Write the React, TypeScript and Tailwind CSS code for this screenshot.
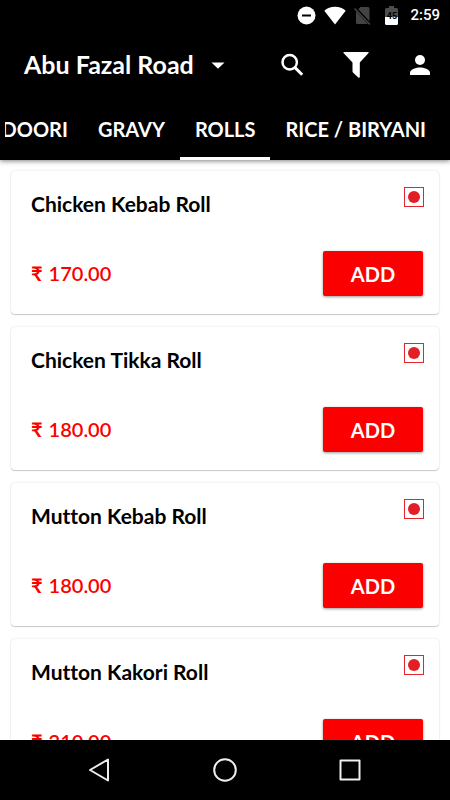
const tabs = ["TANDOORI", "GRAVY", "ROLLS", "RICE / BIRYANI"];

const items = [
  { name: "Chicken Kebab Roll", price: "170.00" },
  { name: "Chicken Tikka Roll", price: "180.00" },
  { name: "Mutton Kebab Roll", price: "180.00" },
  { name: "Mutton Kakori Roll", price: "210.00" },
];

function StatusBar() {
  return (
    <div className="flex h-[30px] shrink-0 items-center justify-end pr-[10px]">
      <svg className="mr-2 size-[19px]" viewBox="0 0 19 19">
        <circle cx="9.5" cy="9.5" r="9" fill="#fff" />
        <rect x="5" y="8.5" width="9" height="2" fill="#000" />
      </svg>
      <svg className="mr-2 h-[19px] w-[22px]" viewBox="0 0 22 19">
        <path d="M11 18.5L.3 4.7C3 2.3 6.800 .8 11 .8s8 1.500 10.700 3.900z" fill="#fff" />
      </svg>
      <svg className="mr-[14px] h-[19px] w-[17px]" viewBox="0 0 17 19">
        <path d="M6.500 1H14a1.500 1.500 0 0 1 1.500 1.500V17L15 18H3.500A1.500 1.500 0 0 1 2 16.500V5.500z" fill="#434343" />
        <path d="M1 2L16.500 18.500" stroke="#000" strokeWidth="3" />
        <path d="M.5 2.500L16 18.500" stroke="#4a4a4a" strokeWidth="1.300" />
      </svg>
      <div className="relative mr-3 h-[19px] w-[13px]">
        <svg className="h-full w-full" viewBox="0 0 13 19">
          <path d="M4 0h5v2h2.500A1.500 1.500 0 0 1 13 3.500V12H0V3.500A1.500 1.500 0 0 1 1.500 2H4z" fill="#4d4d4d" />
          <path d="M0 11h13v6.500a1.500 1.500 0 0 1-1.500 1.500h-10A1.500 1.500 0 0 1 0 17.500z" fill="#fff" />
        </svg>
        <span className="absolute inset-x-0 top-1 text-center font-['Roboto',sans-serif] text-[9px] leading-3 font-bold text-black">
          45
        </span>
      </div>
      <time className="font-['Roboto',sans-serif] text-[15px] leading-5 font-medium text-white">2:59</time>
    </div>
  );
}

function Toolbar() {
  return (
    <div className="flex h-[70px] shrink-0 items-center pr-[17px] pl-6 text-white">
      <button className="flex items-center gap-[17px] text-[25px] font-bold">
        Abu Fazal Road
        <svg className="h-[7px] w-[14px]" viewBox="0 0 14 7">
          <path d="M.5.500h13L7 6.800z" fill="currentColor" />
        </svg>
      </button>
      <div className="ml-auto flex items-center">
        <button aria-label="Search" className="mr-[37px]">
          <svg className="size-[26px]" viewBox="0 0 26 26" fill="none" stroke="currentColor">
            <circle cx="9.700" cy="10.300" r="7.200" strokeWidth="2.500" />
            <path d="M14.800 15.400l7.400 7.400" strokeWidth="3" />
          </svg>
        </button>
        <button aria-label="Filter" className="mr-[41px]">
          <svg className="size-[26px]" viewBox="0 0 26 26" fill="currentColor">
            <path d="M1 0h24q1 0 .6 1L16.800 10.500V25q-.3 1.200-1.500.4L10.200 20.800q-.7-.7-.7-1.500V10.500L.5 1Q0 0 1 0z" />
          </svg>
        </button>
        <button aria-label="Account" className="mr-[3px]">
          <svg className="size-5" viewBox="0 0 20 20" fill="currentColor">
            <circle cx="10" cy="5" r="5" />
            <path d="M0 20v-2.500C0 14.200 6.500 12.400 10 12.400s10 1.800 10 5.100V20z" />
          </svg>
        </button>
      </div>
    </div>
  );
}

function MenuCard({ name, price }: { name: string; price: string }) {
  return (
    <li className="flex h-[143px] flex-col justify-between rounded-[4px] bg-white px-4 pt-4 pb-[18px] pl-5 shadow-[0_0_2px_rgba(0,0,0,0.16),0_1px_1px_rgba(0,0,0,0.18)]">
      <div className="flex items-start justify-between">
        <h2 className="pt-[3px] text-[21px] leading-7 font-bold text-black [font-variant-ligatures:none]">{name}</h2>
        <svg className="-mr-px size-5" viewBox="0 0 20 20" role="img" aria-label="Non-vegetarian">
          <rect x=".5" y=".5" width="19" height="19" fill="#fff" stroke="#e4252b" />
          <circle cx="10" cy="10" r="6" fill="#e31e25" />
        </svg>
      </div>
      <div className="flex items-center justify-between">
        <div className="flex items-baseline gap-[6px] pb-0.5 text-xl leading-7 text-[#fb0000]">
          <span className="font-bold">₹</span>
          <span className="font-semibold">{price}</span>
        </div>
        <button className="h-[45px] w-[100px] rounded-[2px] bg-[#fb0000] text-xl font-bold text-white shadow-[0_1px_3px_rgba(0,0,0,0.4)]">
          ADD
        </button>
      </div>
    </li>
  );
}

export default function App() {
  return (
    <div className="flex h-screen flex-col bg-white font-['Lato',sans-serif]">
      <header className="relative z-10 shrink-0 bg-black shadow-[0_1px_5px_rgba(0,0,0,0.5)]">
        <StatusBar />
        <Toolbar />
        <nav className="ml-[5px] flex h-[60px] justify-end overflow-hidden pr-[9px]">
          {tabs.map((tab) => (
            <a
              key={tab}
              href="#"
              aria-current={tab === "ROLLS" ? "page" : undefined}
              className={`flex shrink-0 items-center border-b-3 px-[15px] text-xl font-bold text-white ${
                tab === "ROLLS" ? "border-white" : "border-transparent"
              }`}
            >
              {tab}
            </a>
          ))}
        </nav>
      </header>

      <main className="min-h-0 flex-1 overflow-hidden">
        <ul className="flex flex-col gap-[13px] px-[11px] pt-[11px]">
          {items.map((item) => (
            <MenuCard key={item.name} {...item} />
          ))}
        </ul>
      </main>

      <footer className="flex h-[60px] shrink-0 items-center justify-center gap-[101px] bg-black text-[#eee]">
        <button aria-label="Back">
          <svg className="size-6" viewBox="0 0 24 24" fill="none" stroke="currentColor" strokeWidth="2" strokeLinejoin="round">
            <path d="M20 1.500v21L2 12z" />
          </svg>
        </button>
        <button aria-label="Home">
          <svg className="size-6" viewBox="0 0 24 24" fill="none" stroke="currentColor" strokeWidth="2">
            <circle cx="12" cy="12" r="10.800" />
          </svg>
        </button>
        <button aria-label="Recent apps">
          <svg className="size-6" viewBox="0 0 24 24" fill="none" stroke="currentColor" strokeWidth="2" strokeLinejoin="round">
            <rect x="2.500" y="2.500" width="19" height="19" />
          </svg>
        </button>
      </footer>
    </div>
  );
}
